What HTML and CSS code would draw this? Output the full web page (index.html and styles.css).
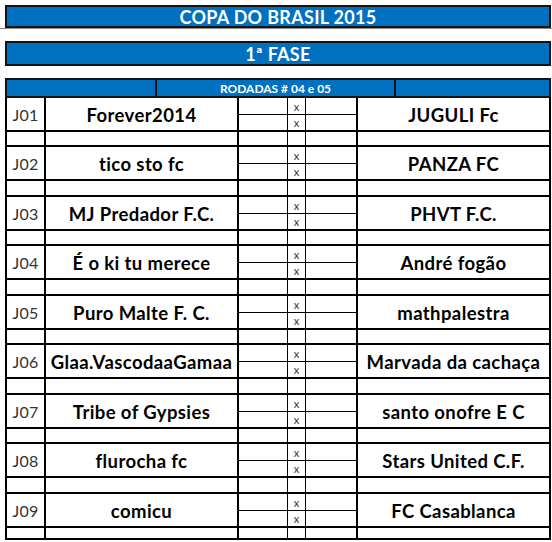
FILE: index.html
```html
<!DOCTYPE html>
<html lang="pt">
<head>
<meta charset="utf-8">
<link rel="stylesheet" href="styles.css">
</head>
<body>
<div class="sheet">
  <div class="band title">COPA DO BRASIL 2015</div>
  <div class="rule"></div>
  <div class="band phase">1ª FASE</div>
  <div class="head">
    <div class="hcell"></div>
    <div class="hcell hmid">RODADAS # 04 e 05</div>
    <div class="hcell hright"></div>
  </div>
  <div class="matches">
    <div class="match"><div class="jid">J01</div><div class="team home">Forever2014</div><div class="sc a t"></div><div class="sc x t">x</div><div class="sc b t"></div><div class="team away">JUGULI Fc</div><div class="sc a u"></div><div class="sc x u">x</div><div class="sc b u"></div><div class="sp j"></div><div class="sp n"></div><div class="sp a"></div><div class="sp x"></div><div class="sp b"></div><div class="sp n2"></div></div>
    <div class="match"><div class="jid">J02</div><div class="team home">tico sto fc</div><div class="sc a t"></div><div class="sc x t">x</div><div class="sc b t"></div><div class="team away">PANZA FC</div><div class="sc a u"></div><div class="sc x u">x</div><div class="sc b u"></div><div class="sp j"></div><div class="sp n"></div><div class="sp a"></div><div class="sp x"></div><div class="sp b"></div><div class="sp n2"></div></div>
    <div class="match"><div class="jid">J03</div><div class="team home">MJ Predador F.C.</div><div class="sc a t"></div><div class="sc x t">x</div><div class="sc b t"></div><div class="team away">PHVT F.C.</div><div class="sc a u"></div><div class="sc x u">x</div><div class="sc b u"></div><div class="sp j"></div><div class="sp n"></div><div class="sp a"></div><div class="sp x"></div><div class="sp b"></div><div class="sp n2"></div></div>
    <div class="match"><div class="jid">J04</div><div class="team home">É o ki tu merece</div><div class="sc a t"></div><div class="sc x t">x</div><div class="sc b t"></div><div class="team away">André fogão</div><div class="sc a u"></div><div class="sc x u">x</div><div class="sc b u"></div><div class="sp j"></div><div class="sp n"></div><div class="sp a"></div><div class="sp x"></div><div class="sp b"></div><div class="sp n2"></div></div>
    <div class="match"><div class="jid">J05</div><div class="team home">Puro Malte F. C.</div><div class="sc a t"></div><div class="sc x t">x</div><div class="sc b t"></div><div class="team away">mathpalestra</div><div class="sc a u"></div><div class="sc x u">x</div><div class="sc b u"></div><div class="sp j"></div><div class="sp n"></div><div class="sp a"></div><div class="sp x"></div><div class="sp b"></div><div class="sp n2"></div></div>
    <div class="match"><div class="jid">J06</div><div class="team home">Glaa.VascodaaGamaa</div><div class="sc a t"></div><div class="sc x t">x</div><div class="sc b t"></div><div class="team away">Marvada da cachaça</div><div class="sc a u"></div><div class="sc x u">x</div><div class="sc b u"></div><div class="sp j"></div><div class="sp n"></div><div class="sp a"></div><div class="sp x"></div><div class="sp b"></div><div class="sp n2"></div></div>
    <div class="match"><div class="jid">J07</div><div class="team home">Tribe of Gypsies</div><div class="sc a t"></div><div class="sc x t">x</div><div class="sc b t"></div><div class="team away">santo onofre E C</div><div class="sc a u"></div><div class="sc x u">x</div><div class="sc b u"></div><div class="sp j"></div><div class="sp n"></div><div class="sp a"></div><div class="sp x"></div><div class="sp b"></div><div class="sp n2"></div></div>
    <div class="match"><div class="jid">J08</div><div class="team home">flurocha fc</div><div class="sc a t"></div><div class="sc x t">x</div><div class="sc b t"></div><div class="team away">Stars United C.F.</div><div class="sc a u"></div><div class="sc x u">x</div><div class="sc b u"></div><div class="sp j"></div><div class="sp n"></div><div class="sp a"></div><div class="sp x"></div><div class="sp b"></div><div class="sp n2"></div></div>
    <div class="match last"><div class="jid">J09</div><div class="team home">comicu</div><div class="sc a t"></div><div class="sc x t">x</div><div class="sc b t"></div><div class="team away">FC Casablanca</div><div class="sc a u"></div><div class="sc x u">x</div><div class="sc b u"></div><div class="sp j"></div><div class="sp n"></div><div class="sp a"></div><div class="sp x"></div><div class="sp b"></div><div class="sp n2"></div></div>
  </div>
</div>
</body>
</html>
```

FILE: styles.css
```css
* { box-sizing: border-box; }
html, body { margin: 0; padding: 0; background: #fff; }
body { font-family: Lato, "Open Sans", sans-serif; color: #000; }

.sheet { width: 552px; padding-top: 5px; }

.band {
  margin-left: 5px;
  width: 546px;
  background: #0070c0;
  border: 2px solid #141414;
  color: #fff;
  font-weight: 700;
  text-align: center;
  display: flex;
  align-items: center;
  justify-content: center;
  letter-spacing: 0.3px;
}
.title { height: 23px; font-size: 18px; }
.rule { height: 1px; background: #8a8a8a; width: 552px; }
.phase { height: 25px; margin-top: 12px; font-size: 18px; }

.head {
  margin-top: 12px;
  margin-left: 5px;
  width: 546px;
  height: 20px;
  display: grid;
  grid-template-columns: 148px 239px 1fr;
  background: #0070c0;
  border: 2px solid #141414;
  border-bottom: 0;
}
.hcell { border-bottom: 2px solid #141414; }
.hmid, .hright { border-left: 2px solid #141414; }
.hmid {
  color: #fff;
  font-weight: 700;
  font-size: 12px;
  display: flex;
  align-items: center;
  justify-content: center;
}

.matches {
  margin-left: 5px;
  width: 546px;
  border-left: 2px solid #000;
}
.match {
  display: grid;
  grid-template-columns: 39px 193px 49px 18px 52px 193px;
  grid-template-rows: 17px 17px 15px;
}
.match:nth-child(even) { grid-template-rows: 17px 17px 16px; }
.match.last { grid-template-rows: 17px 17px 12px; }

.match > div { border-right: 2px solid #000; border-bottom: 2px solid #000; }

.jid {
  grid-row: 1 / 3;
  grid-column: 1;
  display: flex;
  align-items: center;
  justify-content: center;
  font-size: 16px;
  letter-spacing: 0.3px;
  color: #333;
}
.team {
  grid-row: 1 / 3;
  display: flex;
  align-items: center;
  justify-content: center;
  font-weight: 700;
  font-size: 18.5px;
  letter-spacing: 0.4px;
  white-space: nowrap;
  overflow: hidden;
  padding-top: 2px;
}
.home { grid-column: 2; }
.away { grid-column: 6; }

.sc.a { grid-column: 3; }
.sc.x { grid-column: 4; }
.sc.b { grid-column: 5; }
.sc.t { grid-row: 1; border-bottom-width: 1px; }
.sc.u { grid-row: 2; }
.match > .sc.a, .match > .sc.x { border-right-width: 1px; }
.sc.x {
  font-size: 11px;
  color: #333;
  display: flex;
  align-items: center;
  justify-content: center;
}

.sp { grid-row: 3; }
.match > .sp.a, .match > .sp.x { border-right-width: 1px; }
```
